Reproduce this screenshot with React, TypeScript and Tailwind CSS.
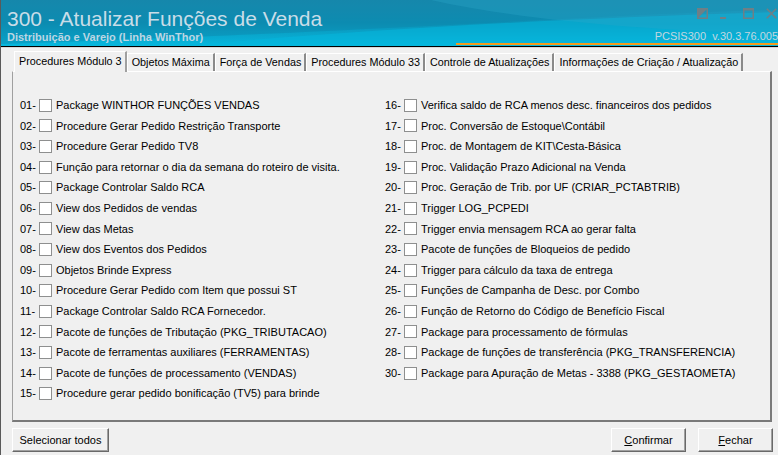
import { useState } from 'react'

const left = [
  ['01', 'Package WINTHOR FUNÇÕES VENDAS'],
  ['02', 'Procedure Gerar Pedido Restrição Transporte'],
  ['03', 'Procedure Gerar Pedido TV8'],
  ['04', 'Função para retornar o dia da semana do roteiro de visita.'],
  ['05', 'Package Controlar Saldo RCA'],
  ['06', 'View dos Pedidos de vendas'],
  ['07', 'View das Metas'],
  ['08', 'View dos Eventos dos Pedidos'],
  ['09', 'Objetos Brinde Express'],
  ['10', 'Procedure Gerar Pedido com Item que possui ST'],
  ['11', 'Package Controlar Saldo RCA Fornecedor.'],
  ['12', 'Pacote de funções de Tributação (PKG_TRIBUTACAO)'],
  ['13', 'Pacote de ferramentas auxiliares (FERRAMENTAS)'],
  ['14', 'Pacote de funções de processamento (VENDAS)'],
  ['15', 'Procedure gerar pedido bonificação (TV5) para brinde'],
]

const right = [
  ['16', 'Verifica saldo de RCA menos desc. financeiros dos pedidos'],
  ['17', 'Proc. Conversão de Estoque\\Contábil'],
  ['18', 'Proc. de Montagem de KIT\\Cesta-Básica'],
  ['19', 'Proc. Validação Prazo Adicional na Venda'],
  ['20', 'Proc. Geração de Trib. por UF (CRIAR_PCTABTRIB)'],
  ['21', 'Trigger LOG_PCPEDI'],
  ['22', 'Trigger envia mensagem RCA ao gerar falta'],
  ['23', 'Pacote de funções de Bloqueios de pedido'],
  ['24', 'Trigger para cálculo da taxa de entrega'],
  ['25', 'Funções de Campanha de Desc. por Combo'],
  ['26', 'Função de Retorno do Código de Benefício Fiscal'],
  ['27', 'Package para processamento de fórmulas'],
  ['28', 'Package de funções de transferência (PKG_TRANSFERENCIA)'],
  ['30', 'Package para Apuração de Metas - 3388 (PKG_GESTAOMETA)'],
]

const tabs = [
  'Procedures Módulo 3',
  'Objetos Máxima',
  'Força de Vendas',
  'Procedures Módulo 33',
  'Controle de Atualizações',
  'Informações de Criação / Atualização',
]

function Row({ num, label, checked, onToggle }: { num: string; label: string; checked: boolean; onToggle: () => void }) {
  return (
    <div className="flex h-[20.6px] items-center whitespace-nowrap">
      <span className="w-[19px]">{num}-</span>
      <button
        onClick={onToggle}
        className="flex h-[13px] w-[13px] items-center justify-center border border-[#8e8f8f] bg-white"
      >
        {checked && (
          <svg width="9" height="9" viewBox="0 0 9 9">
            <path d="M1 4.5 L3.5 7 L8 1.5" stroke="#222" strokeWidth="1.6" fill="none" />
          </svg>
        )}
      </button>
      <span className="ml-[4px]">{label}</span>
    </div>
  )
}

function WinButton({ children, className }: { children: React.ReactNode; className: string }) {
  return (
    <button
      className={`h-[24px] border border-t-white border-l-white border-r-[#696969] border-b-[#696969] bg-[#f0f0f0] shadow-[inset_-1px_-1px_0_#a0a0a0] text-[11px] text-black ${className}`}
    >
      {children}
    </button>
  )
}

export default function App() {
  const [checked, setChecked] = useState<Record<string, boolean>>({})
  const toggle = (n: string) => setChecked(prev => ({ ...prev, [n]: !prev[n] }))

  return (
    <div className="flex h-[455px] w-[778px] flex-col overflow-hidden border-l border-[#5a5a5a] bg-[#f0f0f0] font-['Liberation_Sans',Arial,sans-serif] text-[11px] text-black">
      {/* header */}
      <div className="relative flex h-[46px] shrink-0 justify-between bg-gradient-to-b from-[#1a8db0] via-[#0b93b8] to-[#07b8de]">
        <svg className="absolute inset-0" width="778" height="46" viewBox="0 0 778 46" preserveAspectRatio="none">
          <path d="M0 0 H778 V10 C600 14 420 30 0 44 Z" fill="#0f7fa4" opacity="0.35" />
          <path d="M180 46 C360 30 560 18 778 12 V46 Z" fill="#05b6dc" opacity="0.55" />
          <path d="M430 0 C520 20 640 30 778 34 V0 Z" fill="#2aa6c8" opacity="0.35" />
        </svg>
        <div className="relative flex flex-col pl-[6px] pt-[6px]">
          <div className="text-[21px] leading-[25px] text-[#c9dde8]">300 - Atualizar Funções de Venda</div>
          <div className="text-[11px] font-bold leading-[13px] text-[#bcd6e3]">Distribuição e Varejo (Linha WinThor)</div>
        </div>
        <div className="relative flex w-[322px] flex-col items-end">
          <div className="flex h-[30px] items-start pr-[1px] pt-[8px]">
            <svg width="11" height="11" viewBox="0 0 11 11">
              <rect x="0.75" y="0.75" width="9.5" height="9.5" fill="none" stroke="#6f7f86" strokeWidth="1.5" />
              <path d="M0 0 L11 0 L0 11 Z" fill="#6f7f86" />
            </svg>
            <svg className="ml-[12px]" width="6" height="11" viewBox="0 0 6 11">
              <rect x="0" y="9" width="6" height="2" fill="#6f7f86" />
            </svg>
            <svg className="ml-[17px]" width="11" height="11" viewBox="0 0 11 11">
              <rect x="0.75" y="1" width="9.5" height="9.25" fill="none" stroke="#6f7f86" strokeWidth="1.5" />
              <rect x="0" y="0" width="11" height="2.5" fill="#6f7f86" />
            </svg>
            <svg className="ml-[12px]" width="11" height="11" viewBox="0 0 11 11">
              <path d="M0.8 0.8 L10.2 10.2 M10.2 0.8 L0.8 10.2" stroke="#6f7f86" strokeWidth="1.6" />
            </svg>
          </div>
          <div className="whitespace-nowrap text-[11px] leading-[12px] text-[#c2d7e0]">PCSIS300&nbsp;&nbsp;v.30.3.76.005</div>
          <div className="mt-[1px] h-[2px] w-full bg-[#f39a1e]" />
        </div>
      </div>
      <div className="h-[1px] shrink-0 bg-black" />
      <div className="h-[1px] shrink-0 bg-[#d8d8d8]" />

      {/* tabs */}
      <div className="flex h-[23px] shrink-0 items-end pl-[13px] pt-[3px] text-[10.8px]">
        {tabs.map((t, i) => (
          <div
            key={t}
            className={
              i === 0
                ? 'relative z-10 -mb-px flex h-[21px] items-center border-t border-l border-white border-r-2 border-r-[#a0a0a0] bg-[#f0f0f0] pl-[4px] pr-[3px] pb-[2px]'
                : 'flex h-[18px] items-center border-t border-l border-white border-r-2 border-r-[#8a8a8a] bg-[#f0f0f0] pl-[4px] pr-[3px]'
            }
          >
            {t}
          </div>
        ))}
      </div>

      {/* panel */}
      <div className="mx-[11px] mr-[6px] flex h-[351px] shrink-0 border-t border-l border-t-white border-l-[#a0a0a0] border-r-2 border-b-2 border-r-[#7a7a7a] border-b-[#7a7a7a] pl-[7px] pt-[23px]">
        <div className="w-[365px]">
          {left.map(([n, l]) => (
            <Row key={n} num={n} label={l} checked={!!checked[n]} onToggle={() => toggle(n)} />
          ))}
        </div>
        <div>
          {right.map(([n, l]) => (
            <Row key={n} num={n} label={l} checked={!!checked[n]} onToggle={() => toggle(n)} />
          ))}
        </div>
      </div>

      {/* footer */}
      <div className="flex items-start px-[11px] pr-[5px] pt-[6px]">
        <WinButton className="w-[97px]">Selecionar todos</WinButton>
        <div className="flex-1" />
        <WinButton className="w-[75px]">
          <span className="underline">C</span>onfirmar
        </WinButton>
        <WinButton className="ml-[12px] w-[75px]">
          <span className="underline">F</span>echar
        </WinButton>
      </div>
    </div>
  )
}
